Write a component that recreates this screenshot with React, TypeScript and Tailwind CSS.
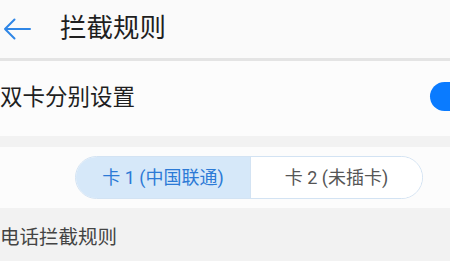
export default function App() {
  const font = { fontFamily: 'Roboto, "Noto Sans CJK SC", "Noto Sans", sans-serif' }

  return (
    <div className="w-[450px] h-[261px] overflow-hidden bg-[#f2f2f2]" style={font}>
      {/* header */}
      <div className="h-[58px] bg-[#fafafa] flex items-center">
        <svg className="ml-[3px] w-[28px] h-[22px]" viewBox="0 0 28 22" fill="none">
          <path d="M27 11H2M11.5 1.5L2 11l9.5 9.5" stroke="#2f86e6" strokeWidth="2" strokeLinecap="round" strokeLinejoin="round" />
        </svg>
        <h1 className="ml-[29px] text-[26.5px] leading-none text-[#1f1f1f] font-normal -mt-[2px]">拦截规则</h1>
      </div>
      <div className="h-[3px] bg-[#e4e4e4]" />

      {/* dual card switch row */}
      <div className="h-[75px] bg-[#fcfcfc] flex items-center justify-between overflow-hidden">
        <span className="text-[22.5px] leading-none text-[#1f1f1f] -mt-[2px]">双卡分别设置</span>
        <div className="w-[50px] h-[29px] rounded-full bg-[#0a7bff] -mr-[30px] -mt-[4px]" />
      </div>

      <div className="h-[11px] bg-[#f2f2f2]" />

      {/* sim tabs */}
      <div className="h-[61px] bg-[#fcfcfc] flex items-center">
        <div className="ml-[75px] w-[348px] h-[43px] flex rounded-full border border-[#d3e3f3] overflow-hidden">
          <div className="w-[175px] bg-[#d6e8f9] flex items-center justify-center text-[18px] text-[#2c7ad6] border-r border-[#d3e3f3]">
            卡 1 (中国联通)
          </div>
          <div className="flex-1 bg-white flex items-center justify-center text-[18px] text-[#555555]">
            卡 2 (未插卡)
          </div>
        </div>
      </div>

      {/* section title */}
      <div className="pt-[20px] text-[19.5px] leading-none text-[#444444]">电话拦截规则</div>
    </div>
  )
}
